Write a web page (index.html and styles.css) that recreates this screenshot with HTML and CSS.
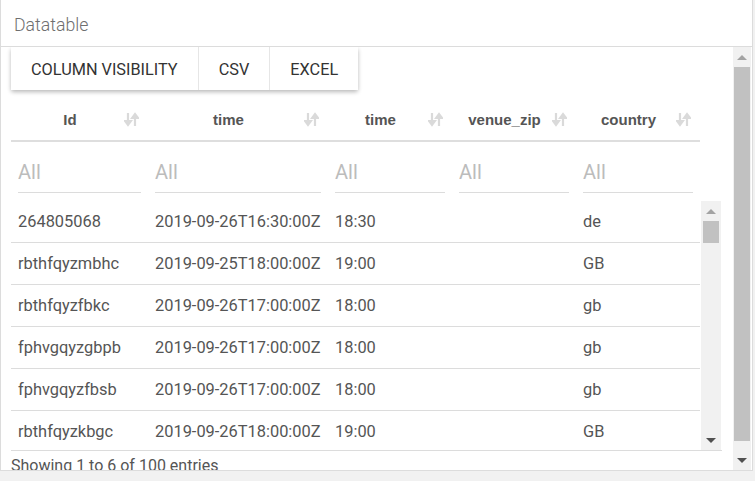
FILE: index.html
```html
<!DOCTYPE html>
<html>
<head>
<meta charset="utf-8">
<link rel="stylesheet" href="styles.css">
</head>
<body>
<div class="card">
  <div class="card-header">Datatable</div>
  <div class="card-body">
    <div class="content">
      <div class="btn-group">
        <button class="btn">Column visibility</button>
        <button class="btn">CSV</button>
        <button class="btn">Excel</button>
      </div>
      <table class="dt dt-head">
        <colgroup><col class="c1"><col class="c2"><col class="c3"><col class="c4"><col class="c5"></colgroup>
        <thead>
          <tr class="titles">
            <th><div class="th-inner"><span class="lbl">Id</span><svg class="sort" viewBox="0 0 15 15"><path d="M4 1v11M1.2 9.2L4 13l2.8-3.8z"/><path d="M11 14V3M8.2 5.8L11 2l2.8 3.8z"/></svg></div></th>
            <th><div class="th-inner"><span class="lbl">time</span><svg class="sort" viewBox="0 0 15 15"><path d="M4 1v11M1.2 9.2L4 13l2.8-3.8z"/><path d="M11 14V3M8.2 5.8L11 2l2.8 3.8z"/></svg></div></th>
            <th><div class="th-inner"><span class="lbl">time</span><svg class="sort" viewBox="0 0 15 15"><path d="M4 1v11M1.2 9.2L4 13l2.8-3.8z"/><path d="M11 14V3M8.2 5.8L11 2l2.8 3.8z"/></svg></div></th>
            <th><div class="th-inner"><span class="lbl">venue_zip</span><svg class="sort" viewBox="0 0 15 15"><path d="M4 1v11M1.2 9.2L4 13l2.8-3.8z"/><path d="M11 14V3M8.2 5.8L11 2l2.8 3.8z"/></svg></div></th>
            <th><div class="th-inner"><span class="lbl">country</span><svg class="sort" viewBox="0 0 15 15"><path d="M4 1v11M1.2 9.2L4 13l2.8-3.8z"/><path d="M11 14V3M8.2 5.8L11 2l2.8 3.8z"/></svg></div></th>
          </tr>
          <tr class="filters">
            <th><input class="filter" placeholder="All"></th>
            <th><input class="filter" placeholder="All"></th>
            <th><input class="filter" placeholder="All"></th>
            <th><input class="filter" placeholder="All"></th>
            <th><input class="filter" placeholder="All"></th>
          </tr>
        </thead>
      </table>
      <div class="scroll-body">
        <div class="scroll-view">
          <table class="dt dt-body">
            <colgroup><col class="c1"><col class="c2"><col class="c3"><col class="c4"><col class="c5"></colgroup>
            <tbody>
              <tr><td>264805068</td><td>2019-09-26T16:30:00Z</td><td>18:30</td><td></td><td>de</td></tr>
              <tr><td>rbthfqyzmbhc</td><td>2019-09-25T18:00:00Z</td><td>19:00</td><td></td><td>GB</td></tr>
              <tr><td>rbthfqyzfbkc</td><td>2019-09-26T17:00:00Z</td><td>18:00</td><td></td><td>gb</td></tr>
              <tr><td>fphvgqyzgbpb</td><td>2019-09-26T17:00:00Z</td><td>18:00</td><td></td><td>gb</td></tr>
              <tr><td>fphvgqyzfbsb</td><td>2019-09-26T17:00:00Z</td><td>18:00</td><td></td><td>gb</td></tr>
              <tr><td>rbthfqyzkbgc</td><td>2019-09-26T18:00:00Z</td><td>19:00</td><td></td><td>GB</td></tr>
            </tbody>
          </table>
        </div>
        <div class="vscroll inner">
          <div class="arrow"><span class="tri up light"></span></div>
          <div class="thumb inner-thumb"></div>
          <div class="fill"></div>
          <div class="arrow"><span class="tri down"></span></div>
        </div>
      </div>
      <div class="info">Showing 1 to 6 of 100 entries</div>
    </div>
    <div class="vscroll outer">
      <div class="arrow"><span class="tri up light"></span></div>
      <div class="thumb outer-thumb"></div>
      <div class="fill"></div>
      <div class="arrow"><span class="tri down"></span></div>
    </div>
  </div>
</div>
</body>
</html>
```
FILE: styles.css
```css
html, body {
  margin: 0;
  padding: 0;
}
body {
  width: 755px;
  height: 481px;
  overflow: hidden;
  background: #f1f1f1;
  font-family: Roboto, "Liberation Sans", sans-serif;
}
.card {
  width: 753px;
  height: 471px;
  box-sizing: border-box;
  background: #fff;
  border: 1px solid #dcdcdc;
  border-top: none;
  display: flex;
  flex-direction: column;
  overflow: hidden;
}
.card-header {
  flex: none;
  height: 47px;
  box-sizing: border-box;
  padding: 4px 0 0 13px;
  border-bottom: 1px solid #dcdcdc;
  display: flex;
  align-items: center;
  font-size: 17.7px;
  font-weight: 300;
  color: #6f6f6f;
}
.card-body {
  flex: 1;
  min-height: 0;
  display: flex;
}
.content {
  flex: 1;
  min-width: 0;
  padding-left: 10px;
  display: flex;
  flex-direction: column;
  overflow: hidden;
}
.btn-group {
  flex: none;
  align-self: flex-start;
  display: flex;
  height: 43px;
  border-radius: 2px;
  background: #fff;
  box-shadow: 0 2px 4px rgba(0,0,0,0.28);
}
.btn {
  border: none;
  border-right: 1px solid #e6e6e6;
  background: #fff;
  padding: 2px 20px 0;
  height: 43px;
  font-family: Roboto, sans-serif;
  font-size: 16.3px;
  text-transform: uppercase;
  color: #333;
  cursor: pointer;
}
.btn:last-child {
  border-right: none;
}
.dt {
  width: 689px;
  table-layout: fixed;
  border-collapse: separate;
  border-spacing: 0;
}
.c1 { width: 137px; }
.c2 { width: 180px; }
.c3 { width: 124px; }
.c4 { width: 124px; }
.c5 { width: 124px; }
.dt-head {
  margin-top: 8px;
  flex: none;
}
.titles th {
  padding: 0 9px 0 10px;
  border-bottom: 2px solid #dedede;
}
.th-inner {
  height: 42px;
  display: flex;
  align-items: center;
}
.lbl {
  flex: 1;
  text-align: center;
  font-family: "Liberation Sans", Arial, sans-serif;
  font-weight: bold;
  font-size: 15px;
  color: #555;
}
.sort {
  flex: none;
  width: 15px;
  height: 15px;
  margin-left: 5px;
}
.sort path {
  fill: #dadada;
  stroke: #dadada;
  stroke-width: 2.2;
}
.filters th {
  padding: 19px 7px 8px;
}
.filter {
  display: block;
  width: 100%;
  height: 22px;
  padding: 0 0 9px;
  margin: 0;
  border: none;
  border-bottom: 1px solid #dcdcdc;
  outline: none;
  background: transparent;
  font-family: Roboto, sans-serif;
  font-size: 20px;
  color: #555;
}
.filter::placeholder {
  color: #bcbcbc;
}
.scroll-body {
  flex: none;
  width: 711px;
  height: 249px;
  border-bottom: 1px solid #dcdcdc;
  display: flex;
}
.scroll-view {
  flex: none;
  width: 689px;
  overflow: hidden;
}
.dt-body td {
  padding: 0 7px;
  line-height: 41px;
  border-bottom: 1px solid #dcdcdc;
  font-size: 16.4px;
  color: #555;
  white-space: nowrap;
  overflow: hidden;
}
.vscroll {
  display: flex;
  flex-direction: column;
  background: #f1f1f1;
}
.vscroll.inner {
  width: 20px;
  margin-left: 1px;
}
.vscroll.outer {
  width: 18px;
  margin-right: 1px;
}
.arrow {
  flex: none;
  height: 20px;
  display: flex;
  align-items: center;
  justify-content: center;
}
.tri {
  width: 0;
  height: 0;
  border-left: 5px solid transparent;
  border-right: 5px solid transparent;
}
.tri.up {
  border-bottom: 5px solid #505050;
}
.tri.up.light {
  border-bottom-color: #a3a3a3;
}
.tri.down {
  border-top: 5px solid #505050;
}
.thumb {
  flex: none;
  background: #c1c1c1;
}
.inner-thumb {
  height: 22px;
  margin: 0 2px;
}
.outer-thumb {
  height: 374px;
  margin: 0 1px;
}
.fill {
  flex: 1;
}
.info {
  flex: none;
  margin-top: 5px;
  line-height: 20px;
  font-size: 16px;
  color: #555;
}
```
